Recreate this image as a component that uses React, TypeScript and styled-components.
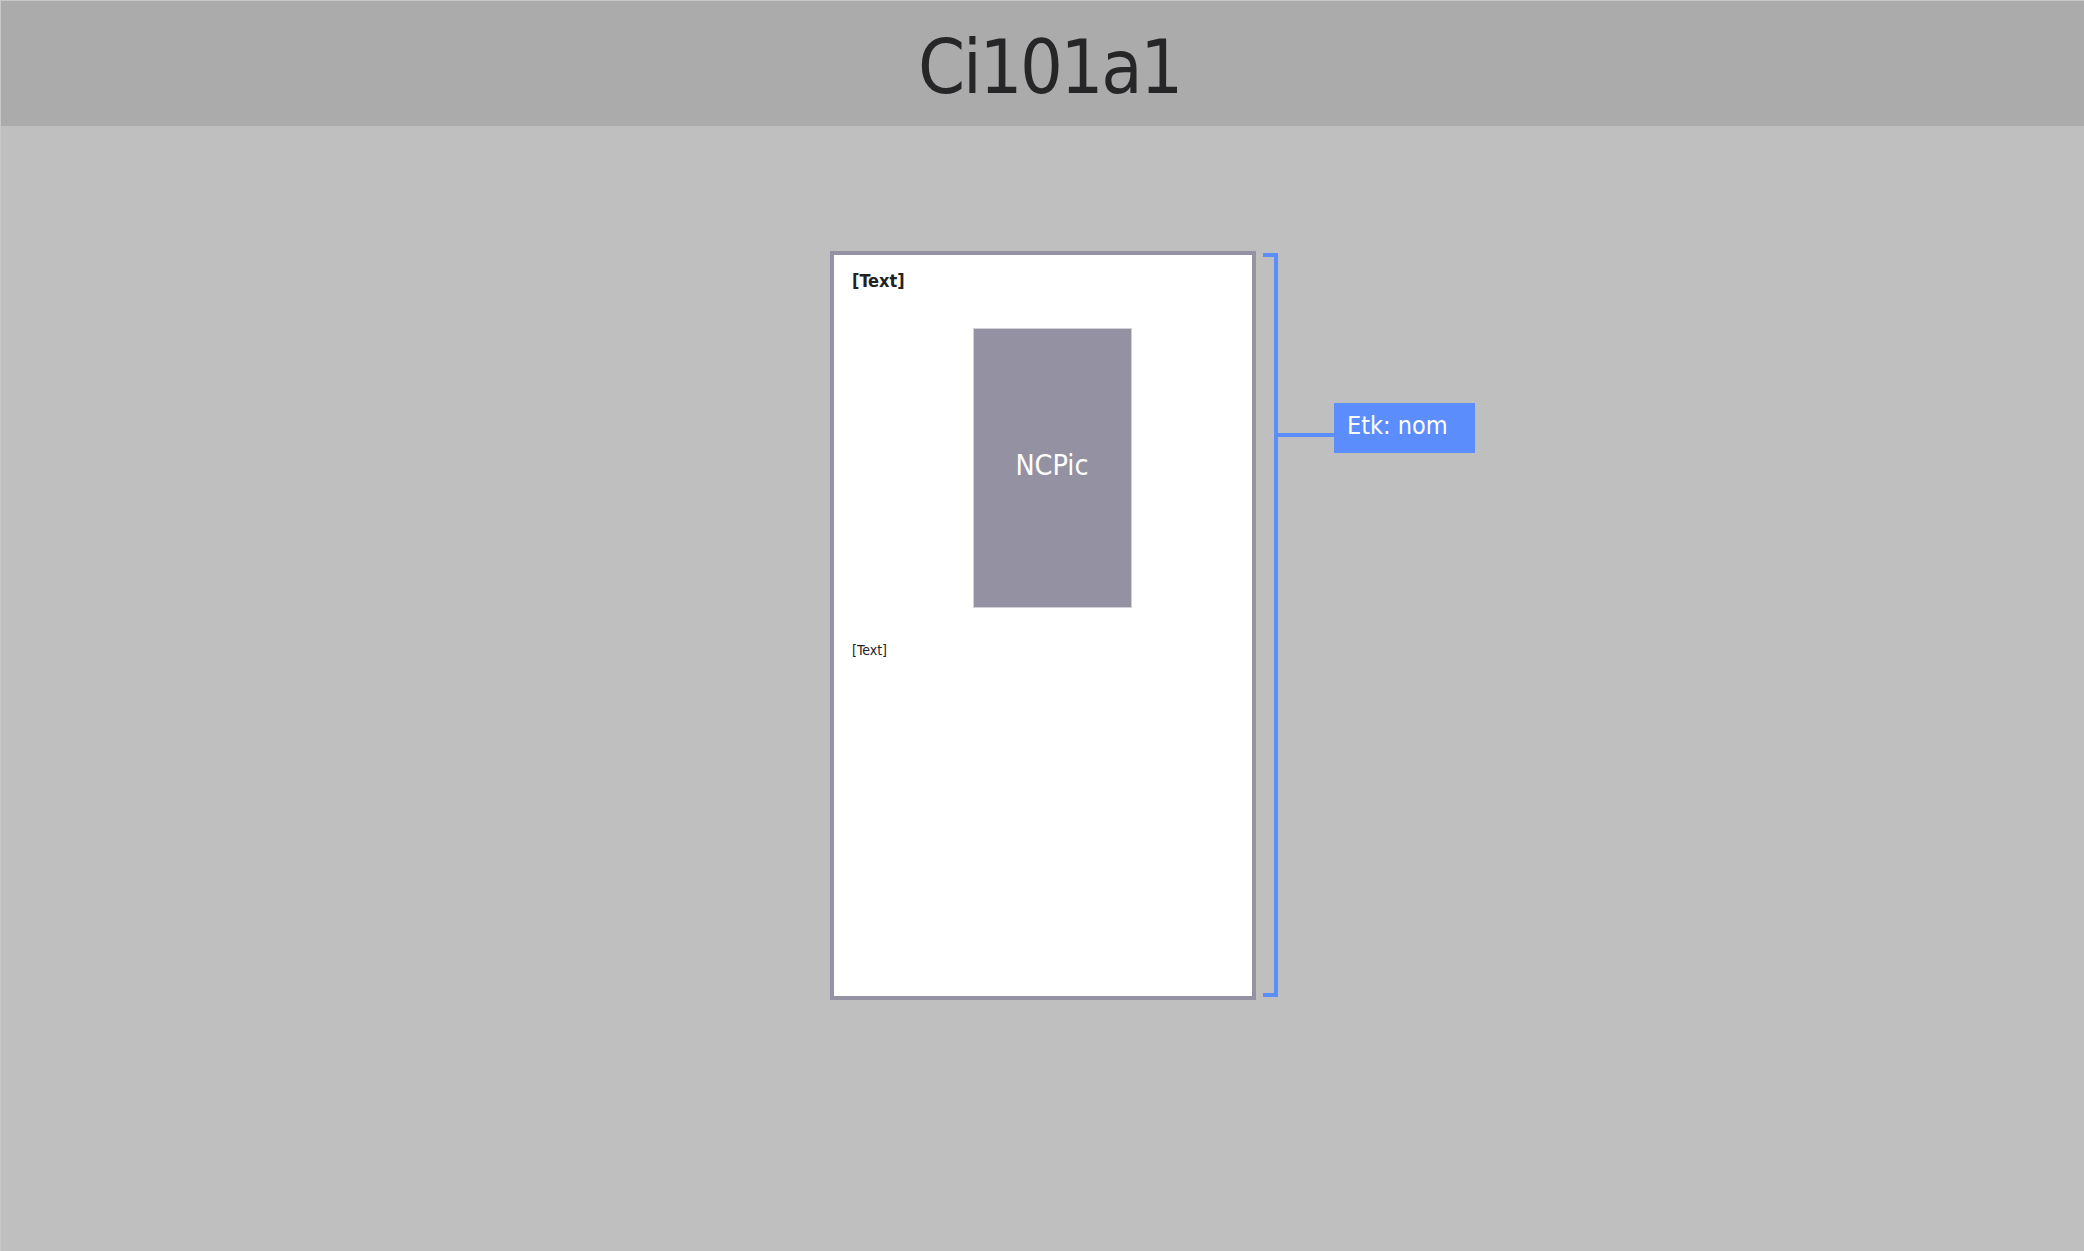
import styled, { createGlobalStyle } from 'styled-components'

const GlobalStyle = createGlobalStyle`
  html, body {
    margin: 0;
    padding: 0;
    background: #bfbfbf;
  }
  body {
    font-family: "DejaVu Sans Condensed", "DejaVu Sans", sans-serif;
  }
`

const blue = '#5b8efc'

const Page = styled.div`
  width: 2084px;
  height: 1251px;
  box-sizing: border-box;
  background: #bfbfbf;
  border-left: 1px solid #c9c9c9;
  border-top: 1px solid #c6c6c6;
  overflow: hidden;
`

const Header = styled.header`
  height: 125px;
  box-sizing: border-box;
  padding: 7px 0 0 14px;
  background: #ababab;
  text-align: center;
`

const Title = styled.h1`
  margin: 0;
  font-family: "DejaVu Sans Condensed", "DejaVu Sans", sans-serif;
  font-weight: normal;
  font-size: 75px;
  line-height: 118px;
  letter-spacing: -2.3px;
  color: #262628;
`

const Main = styled.main`
  display: grid;
  grid-template-columns: 1fr 426px 1fr;
  align-items: start;
  padding: 125px 0 0 1px;
`

const Card = styled.section`
  grid-column: 2;
  height: 749px;
  box-sizing: border-box;
  border: 4px solid #9592a4;
  background: #ffffff;
  padding: 16px 0 0 18px;
`

const Heading = styled.div`
  font-family: "DejaVu Sans Condensed", "DejaVu Sans", sans-serif;
  font-weight: bold;
  font-size: 18px;
  line-height: 20px;
  color: #222222;
`

const Pic = styled.div`
  width: 159px;
  height: 280px;
  box-sizing: border-box;
  margin: 37px auto 0;
  padding-bottom: 6px;
  background: #9391a2;
  border: 1px solid #d2d1d9;
  display: flex;
  align-items: center;
  justify-content: center;
  color: #ffffff;
  font-size: 28.5px;
  font-family: "DejaVu Sans Condensed", "DejaVu Sans", sans-serif;
`

const Caption = styled.div`
  margin-top: 34px;
  font-family: "DejaVu Sans Condensed", "DejaVu Sans", sans-serif;
  font-size: 14px;
  line-height: 16px;
  color: #222222;
`

const Annotation = styled.div`
  grid-column: 3;
  display: flex;
  align-items: flex-start;
  padding-left: 7px;
`

const Bracket = styled.div`
  width: 15px;
  height: 744px;
  margin-top: 2px;
  box-sizing: border-box;
  border: 4px solid ${blue};
  border-left: none;
`

const Connector = styled.div`
  width: 56px;
  height: 4px;
  margin-top: 182px;
  background: ${blue};
`

const Label = styled.div`
  width: 141px;
  height: 50px;
  margin-top: 152px;
  box-sizing: border-box;
  padding: 9px 0 0 13px;
  background: ${blue};
  color: #ffffff;
  font-family: "DejaVu Sans Condensed", "DejaVu Sans", sans-serif;
  font-size: 25px;
  line-height: 28px;
  white-space: nowrap;
`

export default function App() {
  return (
    <>
      <GlobalStyle />
      <Page>
        <Header>
          <Title>Ci101a1</Title>
        </Header>
        <Main>
          <Card>
            <Heading>[Text]</Heading>
            <Pic>NCPic</Pic>
            <Caption>[Text]</Caption>
          </Card>
          <Annotation>
            <Bracket />
            <Connector />
            <Label>Etk: nom</Label>
          </Annotation>
        </Main>
      </Page>
    </>
  )
}
